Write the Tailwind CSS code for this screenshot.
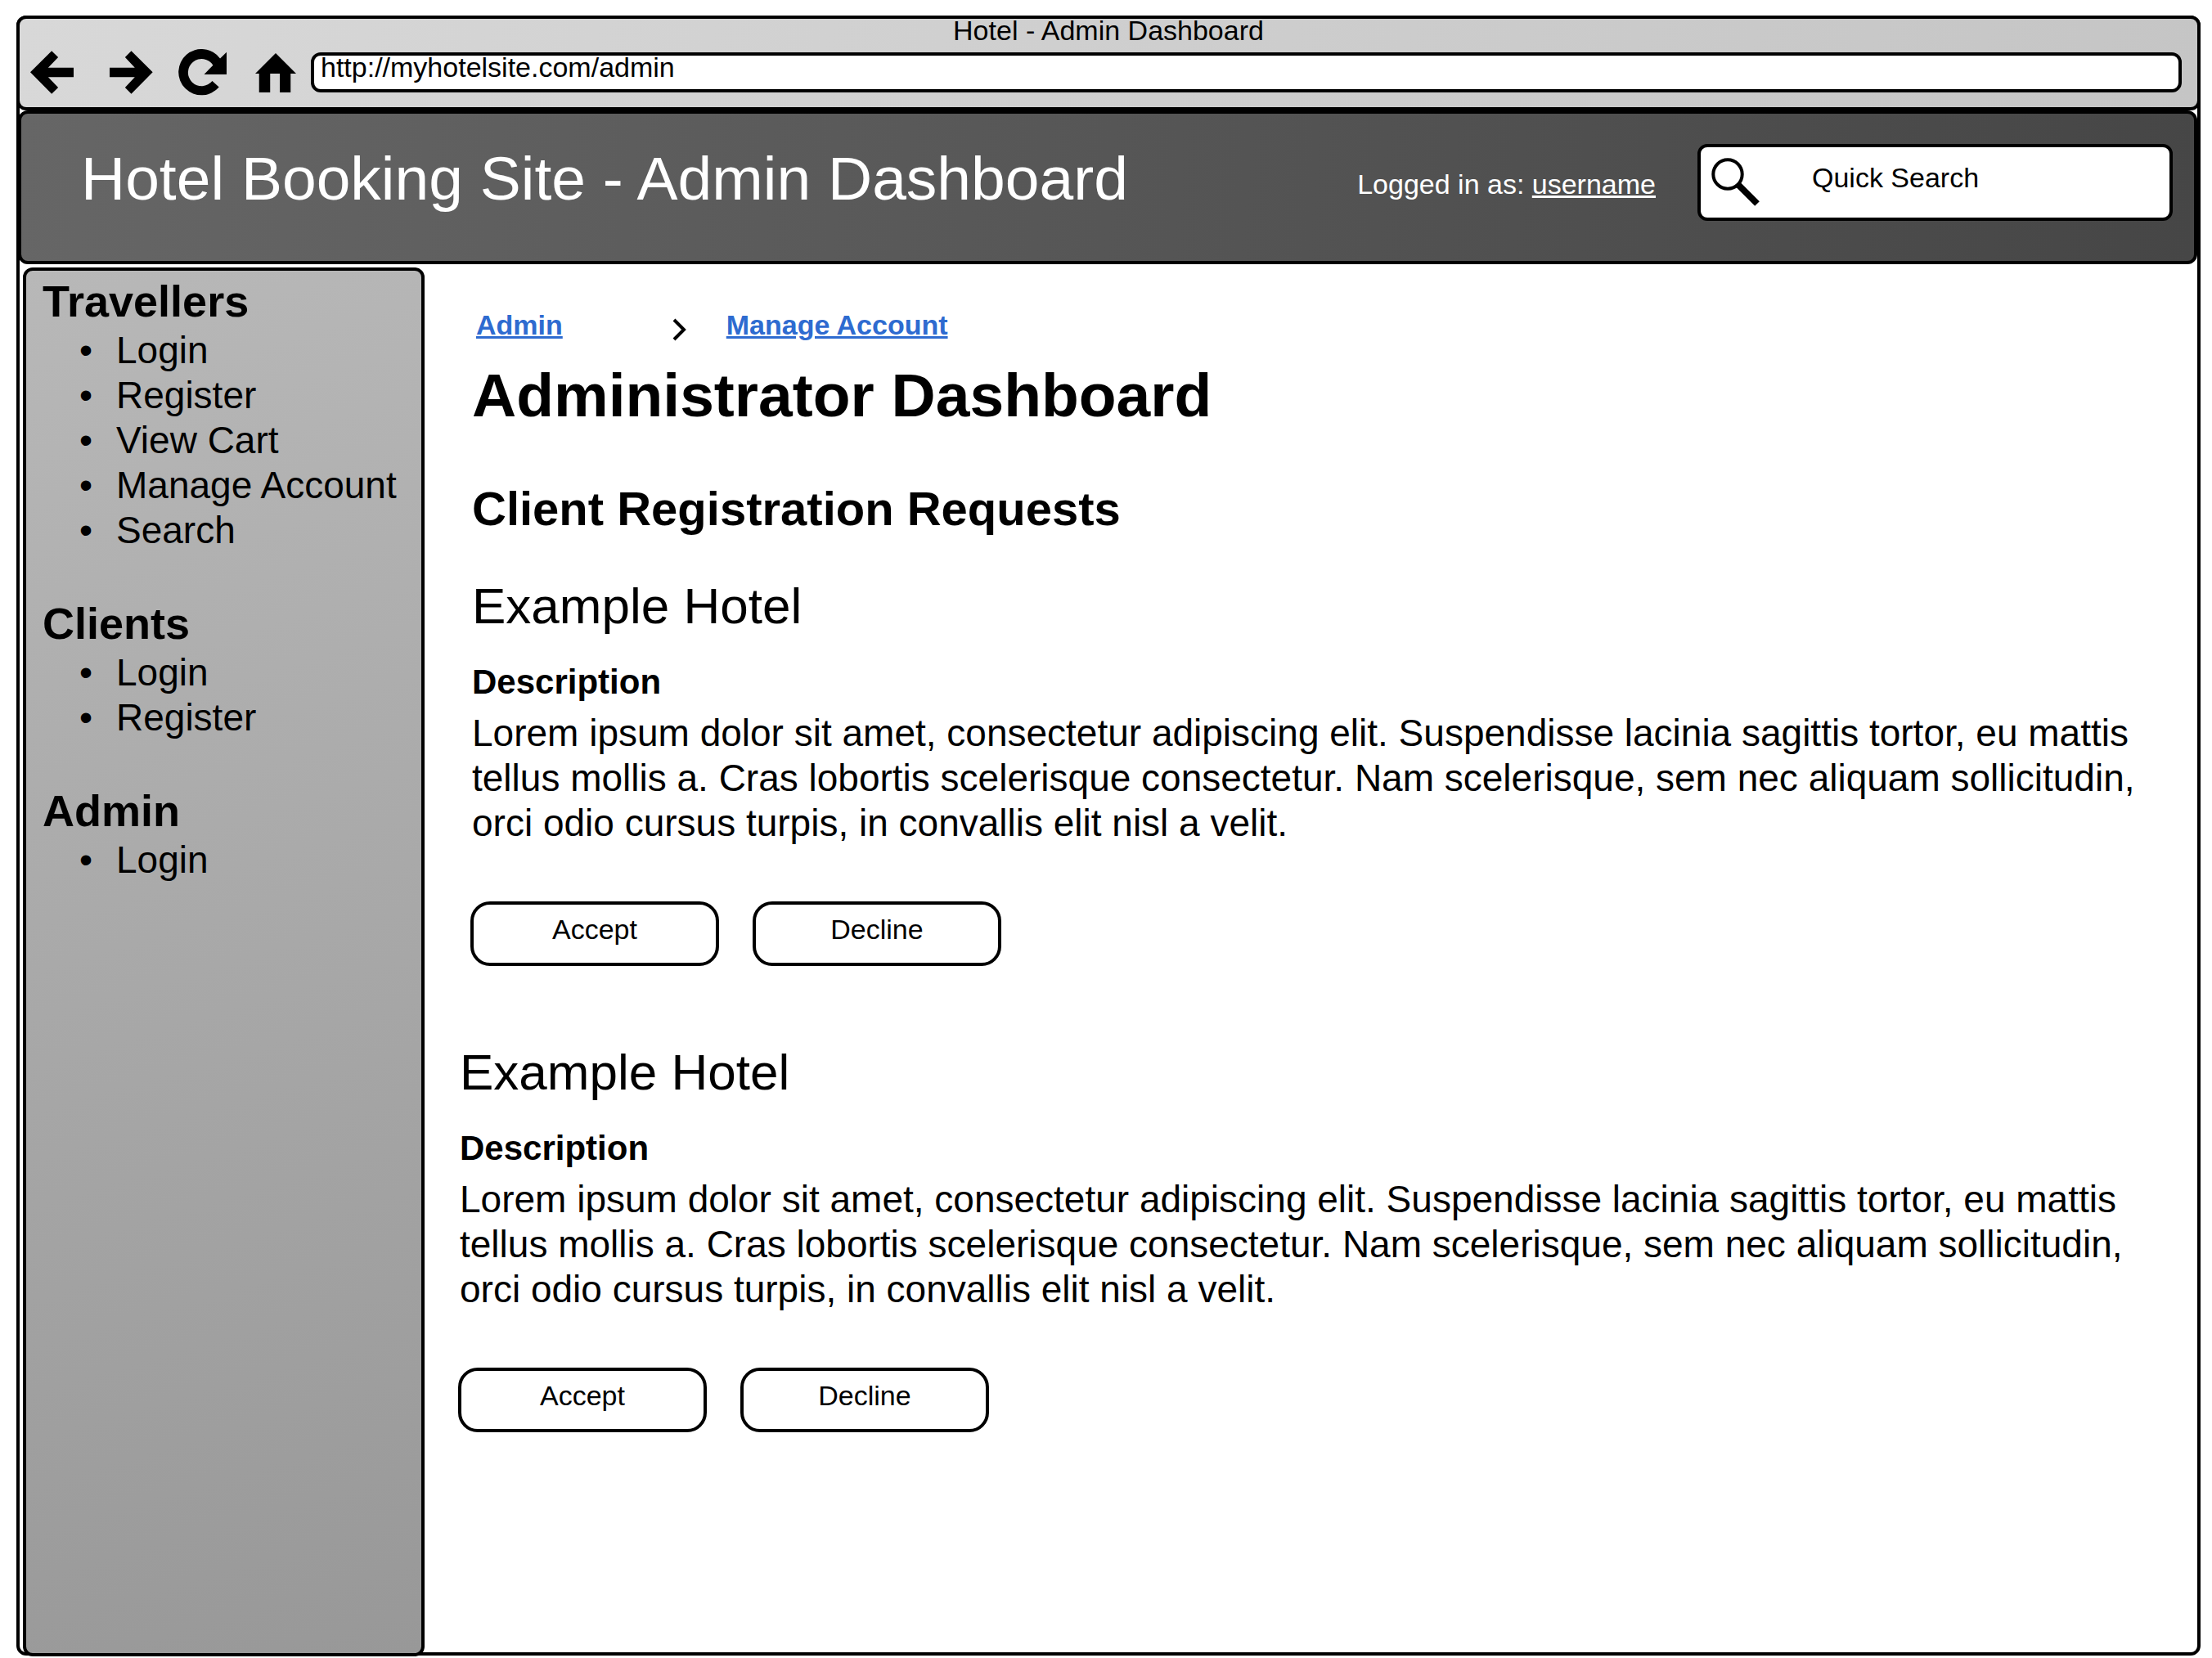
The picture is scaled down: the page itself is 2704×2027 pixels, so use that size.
<!DOCTYPE html>
<html lang="en">
<head>
<meta charset="utf-8">
<title>Hotel - Admin Dashboard</title>
<script src="https://cdn.jsdelivr.net/npm/@tailwindcss/browser@4"></script>
</head>
<body class="flex min-h-screen flex-col bg-white pt-[19px] pr-[14px] pb-[3px] pl-5 font-['Liberation_Sans',Arial,sans-serif] text-[34px] leading-[40px] text-black">
<div class="flex flex-1 flex-col rounded-xl border-4 border-black">

  <!-- Browser chrome -->
  <div class="-mx-1 -mt-1 rounded-xl border-4 border-black bg-[linear-gradient(105deg,#d8d8d8,#c5c5c5)] pb-[14px]">
    <p class="text-center leading-[28px]">Hotel - Admin Dashboard</p>
    <div class="mt-[9px] flex items-center pr-[19px] pl-[13px]">
      <button type="button" aria-label="Back" class="shrink-0">
        <svg class="block h-[53px] w-[53px]" viewBox="110 186 160 159"><path d="M110 265 189 186 213 210 176 248H270V283H176L213 321 189 345Z"/></svg>
      </button>
      <button type="button" aria-label="Forward" class="ml-11 shrink-0">
        <svg class="block h-[53px] w-[53px]" viewBox="403 186 160 159"><path d="M562 265 483 186 460 210 496 248H403V283H496L460 321 483 345Z"/></svg>
      </button>
      <button type="button" aria-label="Reload" class="ml-[31px] shrink-0">
        <svg class="block h-[57px] w-[59px]" viewBox="653 177 178 171"><path d="M807 211 831 188V270H748L781 236A50 50 0 1 0 778 294L803 317A85 85 0 1 1 807 211Z"/></svg>
      </button>
      <button type="button" aria-label="Home" class="ml-[35px] shrink-0">
        <svg class="block h-[48px] w-[50px]" viewBox="937 194 148 142"><path d="M1011 194 1085 268H1065V336H1026V268H991V336H951V268H937Z"/></svg>
      </button>
      <input type="text" aria-label="Address" value="http://myhotelsite.com/admin" class="ml-[18px] h-[49px] min-w-0 flex-1 rounded-xl border-4 border-black bg-white px-2 pb-3 leading-[29px] outline-none">
    </div>
  </div>

  <!-- Site header -->
  <header class="-ml-[2px] flex items-start rounded-xl border-4 border-black bg-[linear-gradient(95deg,#666666,#464646)] pt-[37px] pr-[26px] pb-[49px] pl-[73px] text-white">
    <h1 class="flex-1 text-[75px] leading-[84px]">Hotel Booking Site - Admin Dashboard</h1>
    <p class="mt-[29px]">Logged in as: <a href="#" class="underline">username</a></p>
    <div class="ml-[51px] flex h-[94px] w-[581px] items-start rounded-xl border-4 border-black bg-white pl-[13px] text-black">
      <svg class="mt-[13px] h-[59px] w-[59px] shrink-0" viewBox="0 0 59 59" fill="none" stroke="#000" aria-hidden="true"><circle cx="20" cy="20" r="17.7" stroke-width="4"/><path d="M33 33 56 56" stroke-width="8"/></svg>
      <input type="search" aria-label="Quick Search" placeholder="Quick Search" class="ml-16 h-[86px] min-w-0 flex-1 pb-3 outline-none placeholder:text-black">
    </div>
  </header>

  <div class="flex flex-1 pt-1">
    <!-- Sidebar -->
    <nav class="-mb-[5px] ml-1 flex w-[491px] shrink-0 flex-col gap-[53px] rounded-xl border-4 border-black bg-[linear-gradient(164deg,#b8b8b8,#989898)] pt-1 pl-5 text-[46px] leading-[55px]">
      <section>
        <h2 class="text-[54px] leading-[66px] font-bold">Travellers</h2>
        <ul class="pl-[45px]">
          <li class="flex before:w-[45px] before:content-['•']"><a href="#">Login</a></li>
          <li class="flex before:w-[45px] before:content-['•']"><a href="#">Register</a></li>
          <li class="flex before:w-[45px] before:content-['•']"><a href="#">View Cart</a></li>
          <li class="flex before:w-[45px] before:content-['•']"><a href="#">Manage Account</a></li>
          <li class="flex before:w-[45px] before:content-['•']"><a href="#">Search</a></li>
        </ul>
      </section>
      <section>
        <h2 class="text-[54px] leading-[66px] font-bold">Clients</h2>
        <ul class="pl-[45px]">
          <li class="flex before:w-[45px] before:content-['•']"><a href="#">Login</a></li>
          <li class="flex before:w-[45px] before:content-['•']"><a href="#">Register</a></li>
        </ul>
      </section>
      <section>
        <h2 class="text-[54px] leading-[66px] font-bold">Admin</h2>
        <ul class="pl-[45px]">
          <li class="flex before:w-[45px] before:content-['•']"><a href="#">Login</a></li>
        </ul>
      </section>
    </nav>

    <!-- Content -->
    <main class="min-w-0 flex-1 pt-[50px] pr-[50px] pl-[43px]">
      <div class="pl-[15px]">
        <div class="flex items-end pl-[5px] font-bold text-[#2e6bd0]" role="navigation" aria-label="Breadcrumb">
          <a href="#" class="underline">Admin</a>
          <svg class="mr-[49px] ml-[134px] h-[28px] w-[17px]" viewBox="0 0 17 28" fill="none" stroke="#000" stroke-width="4" aria-hidden="true"><path d="M2 2 14 14 2 26"/></svg>
          <a href="#" class="underline">Manage Account</a>
        </div>
        <h2 class="mt-6 text-[75px] leading-[84px] font-bold">Administrator Dashboard</h2>
        <h3 class="mt-16 text-[58px] leading-[66px] font-bold">Client Registration Requests</h3>
      </div>

      <article class="mt-[51px] pl-[15px]">
        <h4 class="text-[62px] leading-[70px]">Example Hotel</h4>
        <h5 class="mt-[34px] text-[42px] leading-[48px] font-bold">Description</h5>
        <p class="mt-[11px] text-[46px] leading-[55px]">Lorem ipsum dolor sit amet, consectetur adipiscing elit. Suspendisse lacinia sagittis tortor, eu mattis tellus mollis a. Cras lobortis scelerisque consectetur. Nam scelerisque, sem nec aliquam sollicitudin, orci odio cursus turpis, in convallis elit nisl a velit.</p>
        <div class="-ml-[2px] mt-[68px] flex gap-[41px]">
          <button type="button" class="h-[79px] w-[304px] rounded-3xl border-4 border-black bg-white pb-3">Accept</button>
          <button type="button" class="h-[79px] w-[304px] rounded-3xl border-4 border-black bg-white pb-3">Decline</button>
        </div>
      </article>

      <article class="mt-[95px]">
        <h4 class="text-[62px] leading-[70px]">Example Hotel</h4>
        <h5 class="mt-[34px] text-[42px] leading-[48px] font-bold">Description</h5>
        <p class="mt-[11px] text-[46px] leading-[55px]">Lorem ipsum dolor sit amet, consectetur adipiscing elit. Suspendisse lacinia sagittis tortor, eu mattis tellus mollis a. Cras lobortis scelerisque consectetur. Nam scelerisque, sem nec aliquam sollicitudin, orci odio cursus turpis, in convallis elit nisl a velit.</p>
        <div class="-ml-[2px] mt-[68px] flex gap-[41px]">
          <button type="button" class="h-[79px] w-[304px] rounded-3xl border-4 border-black bg-white pb-3">Accept</button>
          <button type="button" class="h-[79px] w-[304px] rounded-3xl border-4 border-black bg-white pb-3">Decline</button>
        </div>
      </article>
    </main>
  </div>
</div>
</body>
</html>
